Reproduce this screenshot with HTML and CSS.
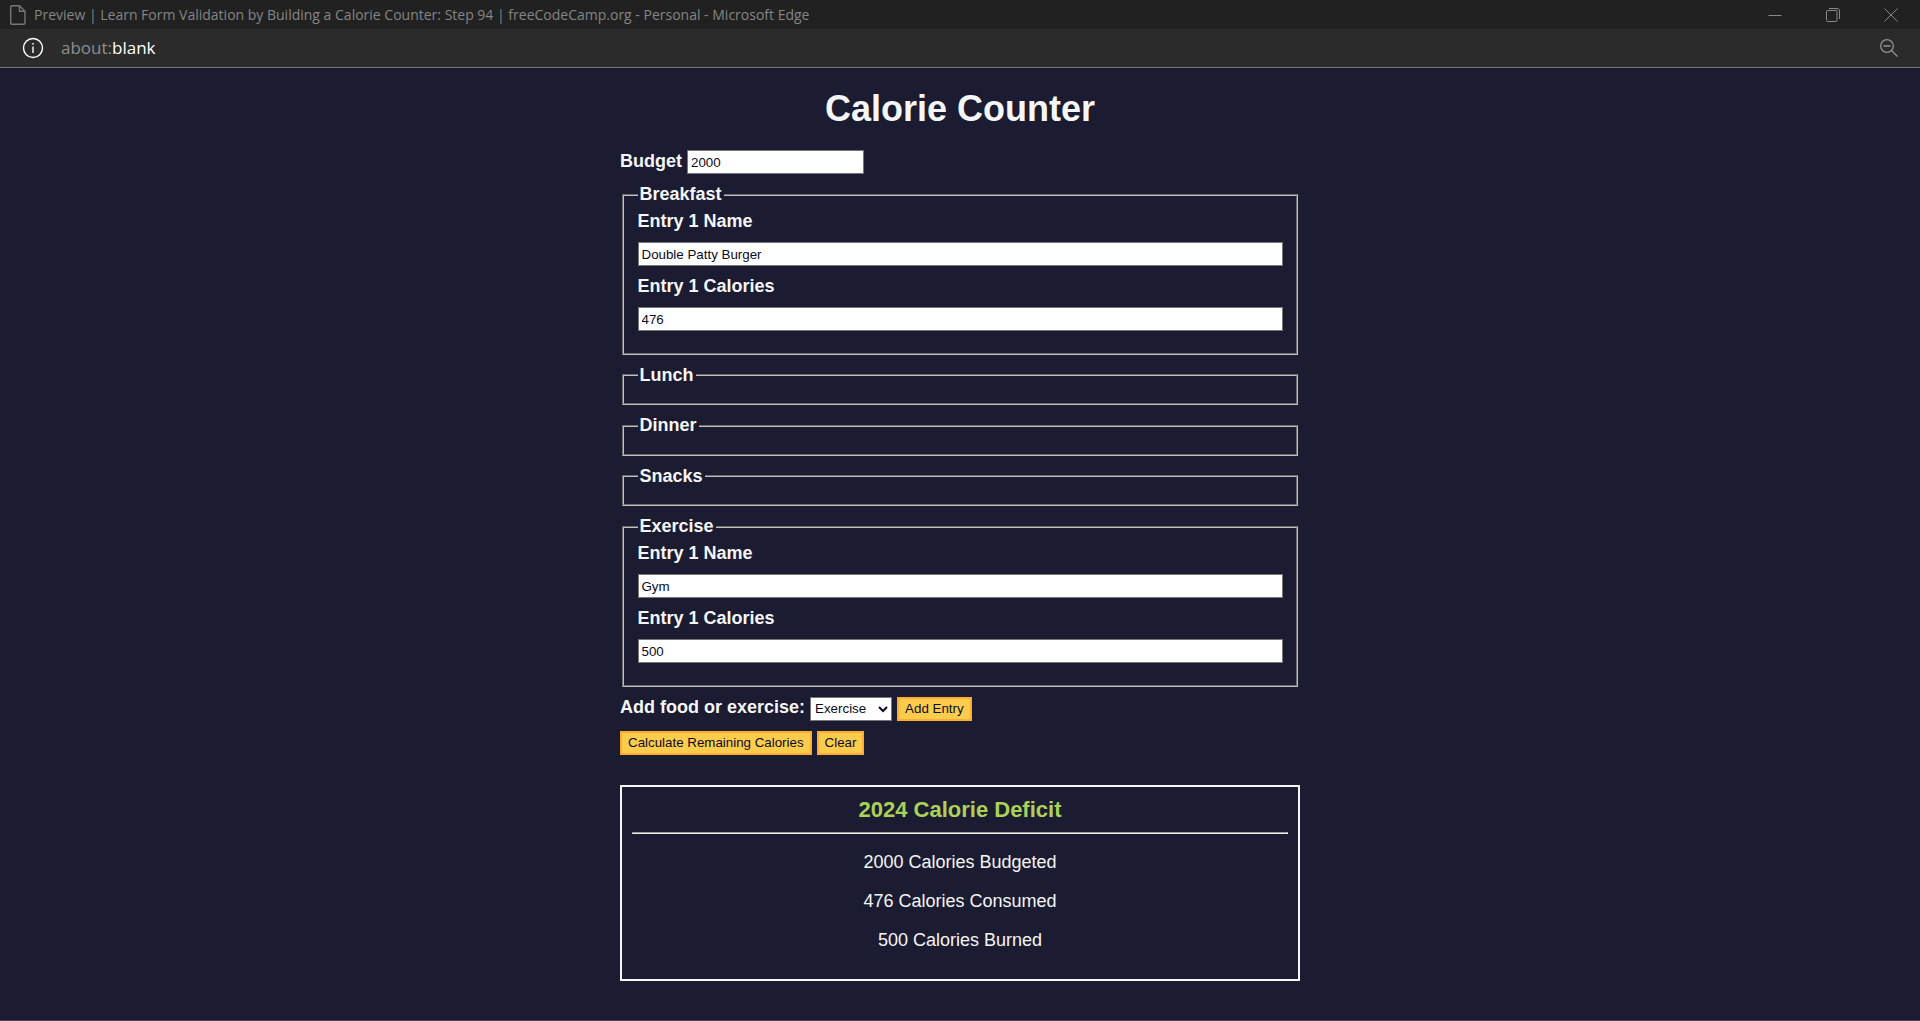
FILE: index.html
```html
<!DOCTYPE html>
<html lang="en">
<head>
  <meta charset="UTF-8">
  <meta name="viewport" content="width=device-width, initial-scale=1.0">
  <title>Calorie Counter</title>
  <link rel="stylesheet" href="styles.css">
</head>
<body>
  <header class="window-chrome">
    <div class="title-bar">
      <svg class="page-icon" width="16" height="20" viewBox="0 0 16 20" fill="none" stroke="#767676" stroke-width="1.4" aria-hidden="true">
        <path d="M2.2.7H9.5L15 6.200V17.800Q15 19.300 13.500 19.300H2.200Q.7 19.300.7 17.800V2.200Q.7.7 2.200.7ZM9.500.7V6.200H15"/>
      </svg>
      <span class="window-title">Preview | Learn Form Validation by Building a Calorie Counter: Step 94 | freeCodeCamp.org - Personal - Microsoft Edge</span>
      <div class="window-buttons">
        <button type="button" class="window-button" aria-label="Minimize">
          <svg width="14" height="14" viewBox="0 0 14 14" fill="none" stroke="#8a8a8a"><path d="M.5 7.500H13.500"/></svg>
        </button>
        <button type="button" class="window-button" aria-label="Restore">
          <svg width="14" height="14" viewBox="0 0 14 14" fill="none" stroke="#8a8a8a"><rect x=".5" y="2.500" width="10.500" height="11" rx="1"/><path d="M3 .5H11Q13.500.5 13.500 3V11"/></svg>
        </button>
        <button type="button" class="window-button" aria-label="Close">
          <svg width="14" height="14" viewBox="0 0 14 14" fill="none" stroke="#8a8a8a"><path d="M.5.5L13.500 13.500M13.500.5L.5 13.500"/></svg>
        </button>
      </div>
    </div>
    <div class="address-bar">
      <button type="button" class="bar-button" aria-label="Site information">
        <svg width="22" height="22" viewBox="0 0 22 22" fill="none" stroke="#fff" stroke-width="1.400"><circle cx="11" cy="11" r="9.500"/><path d="M11 9.500V16"/><circle cx="11" cy="6.800" r=".9" fill="#fff" stroke="none"/></svg>
      </button>
      <span class="address">about:<span class="address-host">blank</span></span>
      <button type="button" class="bar-button zoom-button" aria-label="Zoom out">
        <svg width="18" height="18" viewBox="0 0 18 18" fill="none" stroke="#929292" stroke-width="1.300"><circle cx="7" cy="7" r="6.300"/><path d="M3.500 7H10.500M11.500 11.500L17.500 17.500"/></svg>
      </button>
    </div>
  </header>
  <main>
    <h1>Calorie Counter</h1>
    <div class="container">
      <form>
        <label for="budget">Budget</label>
        <input type="text" inputmode="numeric" id="budget" class="budget" value="2000">
        <fieldset>
          <legend>Breakfast</legend>
          <div class="input-container">
            <label for="breakfast-1-name">Entry 1 Name</label>
            <input type="text" id="breakfast-1-name" value="Double Patty Burger">
            <label for="breakfast-1-calories">Entry 1 Calories</label>
            <input type="number" id="breakfast-1-calories" value="476">
          </div>
        </fieldset>
        <fieldset>
          <legend>Lunch</legend>
          <div class="input-container"></div>
        </fieldset>
        <fieldset>
          <legend>Dinner</legend>
          <div class="input-container"></div>
        </fieldset>
        <fieldset>
          <legend>Snacks</legend>
          <div class="input-container"></div>
        </fieldset>
        <fieldset>
          <legend>Exercise</legend>
          <div class="input-container">
            <label for="exercise-1-name">Entry 1 Name</label>
            <input type="text" id="exercise-1-name" value="Gym">
            <label for="exercise-1-calories">Entry 1 Calories</label>
            <input type="number" id="exercise-1-calories" value="500">
          </div>
        </fieldset>
        <div class="controls">
          <label for="entry-dropdown">Add food or exercise:</label>
          <select id="entry-dropdown">
            <option>Breakfast</option>
            <option>Lunch</option>
            <option>Dinner</option>
            <option>Snacks</option>
            <option selected>Exercise</option>
          </select>
          <button type="button" class="action">Add Entry</button>
        </div>
        <div>
          <button type="submit" class="action">Calculate Remaining Calories</button>
          <button type="button" class="action">Clear</button>
        </div>
      </form>
      <div class="output">
        <span class="deficit">2024 Calorie Deficit</span>
        <hr>
        <p>2000 Calories Budgeted</p>
        <p>476 Calories Consumed</p>
        <p>500 Calories Burned</p>
      </div>
    </div>
  </main>
</body>
</html>
```
FILE: styles.css
```css
:root {
  --light-grey: #f5f6f7;
  --dark-blue: #0a0a23;
  --page-blue: #1b1b32;
  --light-yellow: #fecc4c;
  --dark-yellow: #feac32;
  --light-green: #acd157;
}

body {
  display: flex;
  flex-direction: column;
  box-sizing: border-box;
  min-height: 100vh;
  margin: 0;
  border-bottom: 1px solid #4a4a4a;
  font-family: "Liberation Sans", Arial, sans-serif;
  font-size: 18px;
  color: var(--light-grey);
  background-color: var(--page-blue);
}

/* Browser window frame */

.window-chrome {
  font-family: "Open Sans", "Noto Sans", sans-serif;
  border-bottom: 1px solid #767676;
}

.title-bar {
  display: flex;
  align-items: center;
  height: 29px;
  padding-left: 10px;
  background-color: #212121;
  color: #858585;
}

.window-title {
  flex: 1;
  padding-left: 8px;
  overflow: hidden;
  white-space: nowrap;
  text-overflow: ellipsis;
  font-size: 14px;
}

.window-buttons {
  display: flex;
}

.window-button,
.bar-button {
  display: flex;
  align-items: center;
  justify-content: center;
  padding: 0;
  border: 0;
  background: none;
}

.window-button {
  width: 58px;
  height: 29px;
}

.address-bar {
  display: flex;
  align-items: center;
  height: 38px;
  padding: 0 22px;
  background-color: #2b2b2b;
}

.address {
  flex: 1;
  padding: 0 0 2px 17px;
  font-size: 17px;
  color: #8f8f8f;
}

.address-host {
  color: #fff;
}

/* Page */

h1 {
  margin: 20px auto;
  font-size: 36px;
  text-align: center;
}

.container {
  width: 90%;
  max-width: 680px;
  margin: 20px auto;
}

label,
legend {
  font-weight: bold;
}

fieldset {
  border: 2px groove #c0c0c0;
}

.input-container {
  display: flex;
  flex-direction: column;
}

.action,
input,
select {
  min-height: 24px;
  color: var(--dark-blue);
}

fieldset,
label,
.action,
input,
select {
  margin-bottom: 10px;
}

input,
select {
  box-sizing: border-box;
  border: 1px solid #767676;
  border-radius: 0;
  background-color: #fff;
}

input {
  padding: 1px 3px;
}

select {
  min-width: 82px;
}

.budget {
  width: 177px;
}

.action {
  border: 2px solid var(--dark-yellow);
  background-color: var(--light-yellow);
  cursor: pointer;
}

.output {
  margin: 20px auto;
  padding: 10px;
  border: 2px solid var(--light-grey);
  text-align: center;
}

.deficit {
  font-size: 22px;
  font-weight: bold;
  color: var(--light-green);
}
```
